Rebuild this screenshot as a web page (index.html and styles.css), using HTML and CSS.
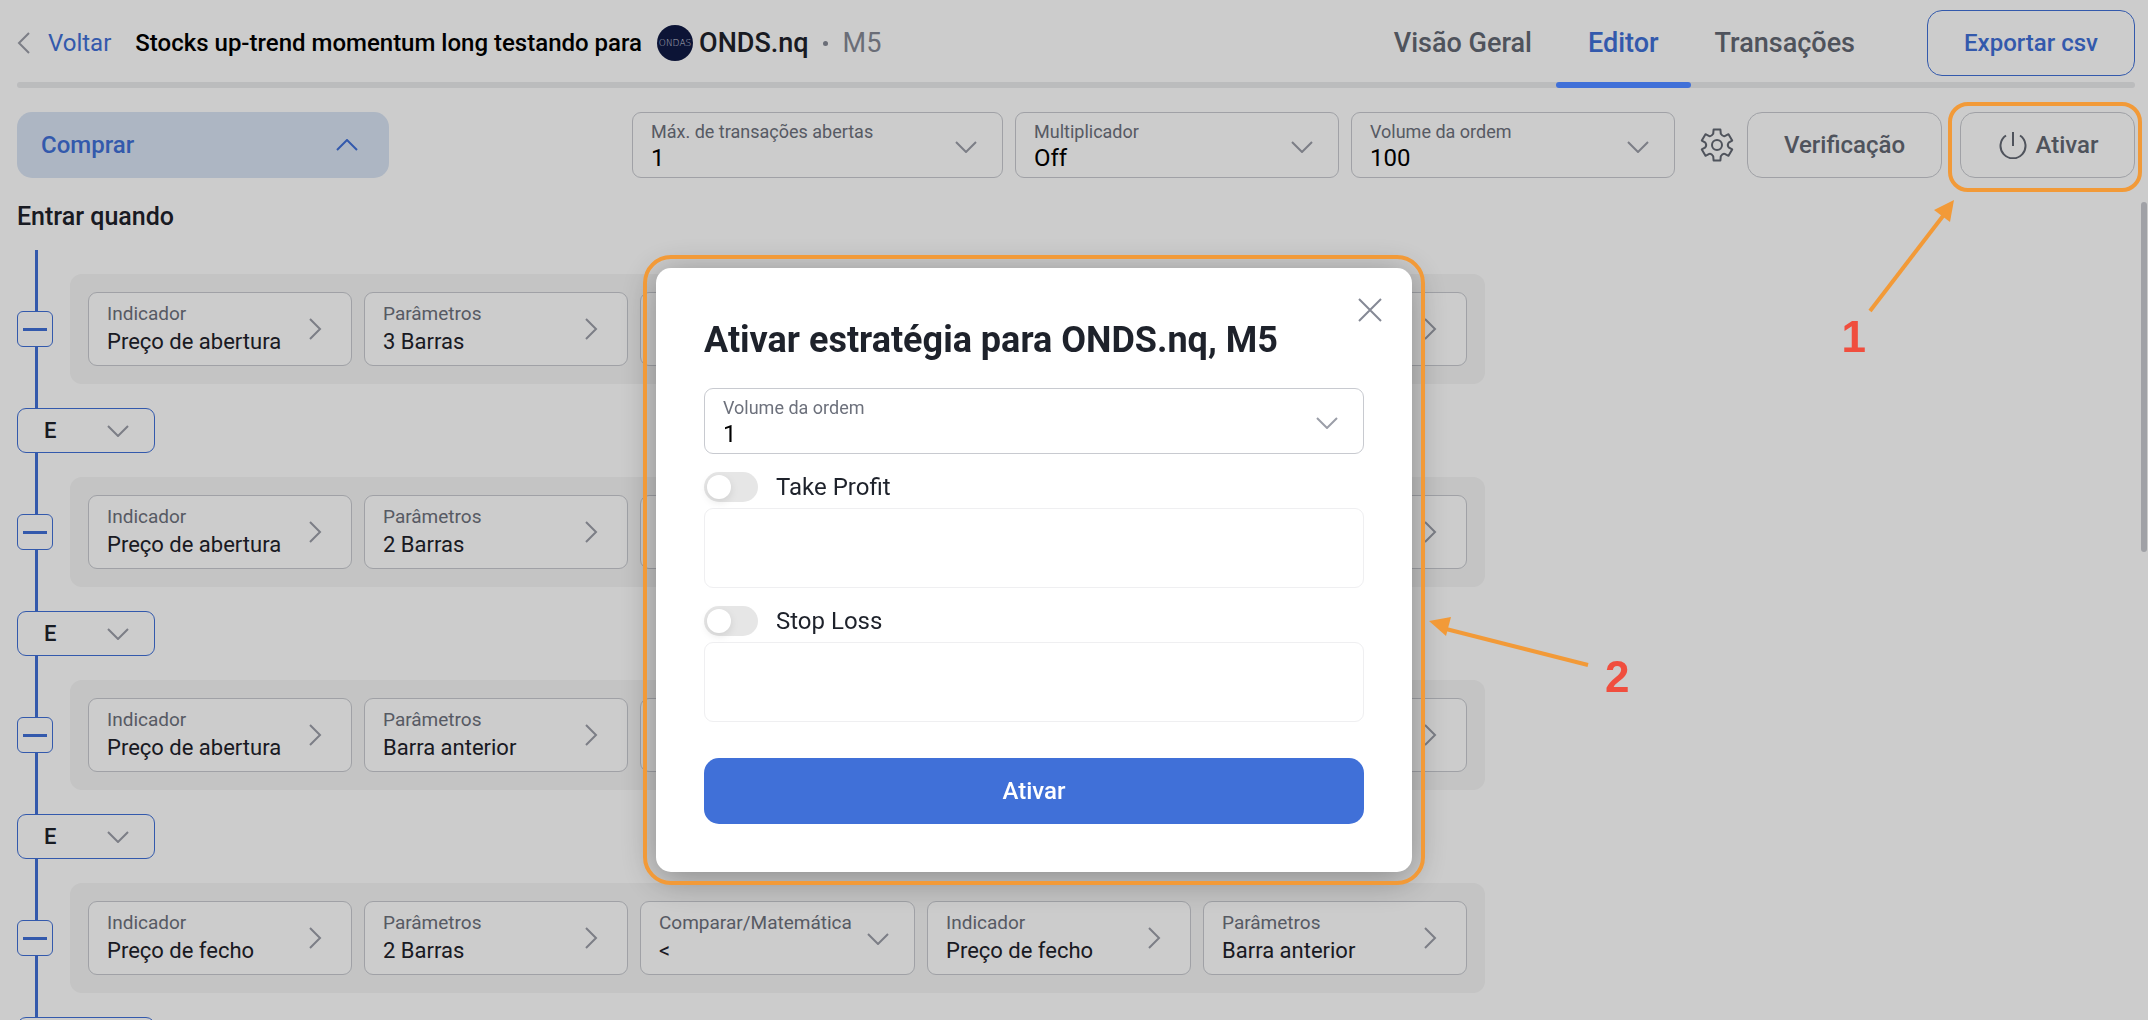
FILE: index.html
```
<!DOCTYPE html>
<html lang="pt">
<head>
    <meta charset="UTF-8">
    <meta name="viewport" content="width=device-width, initial-scale=1.0">
    <title>ONDS.nq - Editor de estratégia</title>
    <link rel="stylesheet" href="styles.css">
</head>
<body>
    <svg class="sprite" aria-hidden="true">
        <symbol id="down" viewBox="0 0 22 12"><path d="M1 1l10 10L21 1"/></symbol>
        <symbol id="right" viewBox="0 0 14 22"><path d="M2 1l10 10L2 21"/></symbol>
    </svg>

    <header class="header">
        <a href="#" class="back">
            <svg class="icon-back" viewBox="0 0 14 22"><path d="M12 1L2 11l10 10"/></svg>
            Voltar
        </a>
        <h1>Stocks up-trend momentum long testando para</h1>
        <div class="symbol">
            <span class="logo">ONDAS</span>
            <span class="symbol-name">ONDS.nq</span>
            <span class="dot"></span>
            <span class="period">M5</span>
        </div>
        <nav class="tabs">
            <a href="#">Visão Geral</a>
            <a href="#" class="active">Editor</a>
            <a href="#">Transações</a>
        </nav>
        <button class="export">Exportar csv</button>
    </header>

    <div class="toolbar">
        <button class="side">
            Comprar
            <svg class="icon-down" viewBox="0 0 22 12"><path d="M1 11L11 1l10 10"/></svg>
        </button>
        <div class="field field-wide">
            <label for="max-trades">Máx. de transações abertas</label>
            <select id="max-trades"><option>1</option></select>
            <svg class="icon-down"><use href="#down"/></svg>
        </div>
        <div class="field">
            <label for="multiplier">Multiplicador</label>
            <select id="multiplier"><option>Off</option></select>
            <svg class="icon-down"><use href="#down"/></svg>
        </div>
        <div class="field">
            <label for="volume">Volume da ordem</label>
            <select id="volume"><option>100</option></select>
            <svg class="icon-down"><use href="#down"/></svg>
        </div>
        <button class="settings" aria-label="Definições">
            <svg viewBox="0 0 34 34">
                <path d="M13.2 5.8L13.6 1.500H20.400L20.800 5.800Q22.800 8.800 24.700 8.100L28.500 6.200L32.200 12.600L28.600 14.700Q27 17 28.600 19.300L32.200 21.400L28.500 27.800L24.700 25.900Q22.800 25.200 20.800 28.200L20.400 32.500H13.600L13.200 28.200Q11.200 25.200 9.300 25.900L5.500 27.800L1.800 21.400L5.400 19.300Q7 17 5.400 14.700L1.800 12.600L5.500 6.200L9.300 8.100Q11.200 8.800 13.200 5.800z"/>
                <circle cx="17" cy="17" r="5"/>
            </svg>
        </button>
        <button class="outline verify">Verificação</button>
        <button class="outline activate">
            <svg viewBox="0 0 28 28"><path d="M14 1v14M7 4.500a12.500 12.500 0 1 0 14 0"/></svg>
            Ativar
        </button>
    </div>

    <main class="editor">
        <h2>Entrar quando</h2>
        <div class="rules" id="rules"></div>
    </main>

    <div class="scrollbar"></div>

    <div class="overlay">
        <div class="modal" role="dialog" aria-labelledby="modal-title">
            <button class="close" aria-label="Fechar">
                <svg viewBox="0 0 24 24"><path d="M1 1l22 22M23 1L1 23"/></svg>
            </button>
            <h2 id="modal-title">Ativar estratégia para ONDS.nq, M5</h2>
            <div class="field">
                <label for="order-volume">Volume da ordem</label>
                <select id="order-volume"><option>1</option></select>
                <svg class="icon-down"><use href="#down"/></svg>
            </div>
            <label class="toggle"><input type="checkbox">Take Profit</label>
            <div class="limit"></div>
            <label class="toggle"><input type="checkbox">Stop Loss</label>
            <div class="limit"></div>
            <button class="submit">Ativar</button>
        </div>
    </div>

    <div class="mark mark-activate"></div>
    <svg class="arrow arrow-one" viewBox="0 0 90 120">
        <path d="M5 113L78 18"/>
        <polygon points="89,2 69,12 85,24"/>
    </svg>
    <span class="step step-one">1</span>
    <svg class="arrow arrow-two" viewBox="0 0 164 54">
        <path d="M162 48L20 12"/>
        <polygon points="3,4 25,0 20,19"/>
    </svg>
    <span class="step step-two">2</span>

    <script>
        const rules = [
            ['Preço de abertura', '3 Barras'],
            ['Preço de abertura', '2 Barras'],
            ['Preço de abertura', 'Barra anterior'],
            ['Preço de fecho', '2 Barras']
        ];

        function card(label, value) {
            return `
                <button class="card">
                    <span class="card-label">${label}</span>
                    <span class="card-value">${value}</span>
                    <svg class="icon-right"><use href="#right"/></svg>
                </button>
            `;
        }

        document.getElementById('rules').innerHTML = rules.map(([indicator, params], i) => `
            <div class="rule">
                <button class="remove" aria-label="Remover"></button>
                <div class="cards">
                    ${card('Indicador', indicator)}
                    ${card('Parâmetros', params)}
                    <div class="card card-compare">
                        <label class="card-label" for="compare-${i}">Comparar/Matemática</label>
                        <select class="card-value" id="compare-${i}"><option>&lt;</option></select>
                        <svg class="icon-down"><use href="#down"/></svg>
                    </div>
                    ${card('Indicador', 'Preço de fecho')}
                    ${card('Parâmetros', 'Barra anterior')}
                </div>
            </div>
            <div class="join">
                <select aria-label="Operador"><option>E</option></select>
                <svg class="icon-down"><use href="#down"/></svg>
            </div>
        `).join('');
    </script>
</body>
</html>
```

FILE: styles.css
```
* {
    box-sizing: border-box;
}

body {
    margin: 0;
    height: 100vh;
    overflow: hidden;
    font-family: Roboto, sans-serif;
    font-size: 24px;
    line-height: 28px;
    color: #1e222b;
    background: #fff;
}

h1, h2 {
    margin: 0;
    font-size: 24px;
    font-weight: 500;
}

a {
    text-decoration: none;
}

button, select {
    font: inherit;
    color: inherit;
    margin: 0;
    padding: 0;
    border: none;
    background: none;
}

select {
    appearance: none;
}

svg {
    fill: none;
    stroke: #9b9ea8;
    stroke-width: 2;
    flex-shrink: 0;
}

.sprite {
    display: none;
}

.icon-down {
    width: 22px;
    height: 12px;
}

.icon-right, .icon-back {
    width: 14px;
    height: 22px;
}

/* Cabeçalho */
.header {
    position: relative;
    display: flex;
    align-items: center;
    height: 88px;
    margin: 0 13px 0 17px;
    padding-bottom: 2px;
}

.header::after {
    content: "";
    position: absolute;
    left: 0;
    right: 0;
    bottom: 0;
    height: 6px;
    border-radius: 3px;
    background: #eaebed;
}

.back {
    display: flex;
    align-items: center;
    gap: 17px;
    color: #4070d8;
}

.header h1 {
    margin-left: 24px;
    color: #000;
}

.symbol {
    display: flex;
    align-items: center;
    margin-left: 15px;
    font-size: 27px;
}

.logo {
    width: 36px;
    height: 36px;
    margin-right: 6px;
    border-radius: 50%;
    background: #101a44;
    color: #d5d8e2;
    font-family: "DejaVu Sans", sans-serif;
    font-size: 9px;
    font-weight: 200;
    line-height: 36px;
    text-align: center;
}

.symbol-name {
    font-weight: 500;
}

.dot {
    width: 5px;
    height: 5px;
    margin: 0 15px 0 14px;
    border-radius: 50%;
    background: #858995;
}

.period {
    color: #858995;
}

.tabs {
    display: flex;
    align-self: stretch;
    margin-left: auto;
    gap: 24px;
    font-size: 27px;
    font-weight: 500;
}

.tabs a {
    position: relative;
    padding-top: 29px;
    color: #636873;
}

.tabs .active {
    padding: 29px 32px 0;
    color: #4070d8;
}

.tabs .active::after {
    content: "";
    position: absolute;
    z-index: 1;
    left: 0;
    right: 0;
    bottom: -2px;
    height: 6px;
    border-radius: 3px;
    background: #4070d8;
}

.export {
    width: 208px;
    height: 66px;
    margin-left: 72px;
    border: 1px solid #4070d8;
    border-radius: 15px;
    color: #4070d8;
    font-weight: 500;
}

/* Barra de ferramentas */
.toolbar {
    display: flex;
    gap: 12px;
    margin: 24px 13px 0 17px;
}

.side {
    display: flex;
    align-items: center;
    justify-content: space-between;
    width: 372px;
    height: 66px;
    margin-right: auto;
    padding: 0 31px 0 24px;
    border-radius: 15px;
    background: #d9e4f4;
    color: #4070d8;
    font-weight: 500;
}

.side svg {
    stroke: #4070d8;
}

.field {
    position: relative;
    width: 324px;
    height: 66px;
    padding: 8px 18px 0;
    border: 1px solid #c8cad0;
    border-radius: 9px;
}

.field-wide {
    width: 371px;
}

.field label {
    display: block;
    font-size: 18px;
    line-height: 22px;
    color: #6d717c;
}

.field select {
    display: block;
    width: 100%;
    height: 30px;
    color: #000;
}

.field svg {
    position: absolute;
    right: 25px;
    top: 28px;
}

.settings {
    width: 34px;
    margin: 0 1px 0 13px;
}

.settings svg {
    display: block;
    width: 34px;
    height: 34px;
    stroke: #636873;
    stroke-linejoin: round;
}

.outline {
    height: 66px;
    border: 1px solid #c8cad0;
    border-radius: 15px;
    color: #636873;
    font-weight: 500;
}

.verify {
    width: 195px;
}

.activate {
    display: flex;
    align-items: center;
    justify-content: center;
    gap: 9px;
    width: 175px;
    margin-left: 6px;
    padding-left: 2px;
}

.activate svg {
    width: 28px;
    height: 28px;
    stroke: #636873;
}

/* Editor de regras */
.editor {
    margin: 24px 17px 0;
}

.editor h2 {
    font-size: 25px;
    line-height: 30px;
}

.rules {
    position: relative;
    display: flex;
    flex-direction: column;
    align-items: flex-start;
    gap: 24px;
    margin-top: 18px;
    padding-top: 24px;
}

.rules::before {
    content: "";
    position: absolute;
    left: 18px;
    top: 0;
    bottom: 0;
    width: 3px;
    background: #4070d8;
}

.rule {
    display: flex;
    align-items: center;
    gap: 17px;
}

.remove {
    position: relative;
    display: flex;
    align-items: center;
    justify-content: center;
    width: 36px;
    height: 36px;
    border: 1px solid #4070d8;
    border-radius: 6px;
    background: #fff;
}

.remove::before {
    content: "";
    width: 24px;
    height: 3px;
    background: #4070d8;
}

.cards {
    display: flex;
    gap: 12px;
    padding: 18px;
    border-radius: 12px;
    background: #f5f5f5;
}

.card {
    position: relative;
    width: 264px;
    height: 74px;
    padding: 0 18px 3px;
    border: 1px solid #c8cad0;
    border-radius: 9px;
    background: #fff;
    text-align: left;
}

.card-compare {
    width: 275px;
    padding-top: 7px;
}

.card-label, .card-value {
    display: block;
    font-size: 19px;
    line-height: 28px;
    color: #6d717c;
}

.card-value {
    width: 100%;
    font-size: 22px;
    color: #1e222b;
}

.card svg {
    position: absolute;
    right: 29px;
    top: 25px;
}

.card .icon-down {
    right: 25px;
    top: 31px;
}

.join {
    position: relative;
    width: 138px;
    height: 45px;
}

.join select {
    width: 100%;
    height: 45px;
    padding-left: 26px;
    border: 1px solid #4070d8;
    border-radius: 9px;
    background: #fff;
    font-size: 22px;
    font-weight: 500;
}

.join svg {
    position: absolute;
    right: 26px;
    top: 17px;
}

.scrollbar {
    position: fixed;
    right: 1px;
    top: 202px;
    width: 6px;
    height: 350px;
    border-radius: 3px;
    background: #c8cad0;
}

/* Janela de ativação */
.overlay {
    position: fixed;
    inset: 0;
    display: flex;
    justify-content: center;
    align-items: flex-start;
    padding: 268px 80px 0 0;
    background: rgba(0, 0, 0, 0.2);
}

.modal {
    position: relative;
    width: 756px;
    padding: 48px;
    border-radius: 15px;
    background: #fff;
    box-shadow: 0 6px 36px rgba(0, 0, 0, 0.35);
    outline: 4px solid #f29a38;
    outline-offset: 9px;
}

.modal h2 {
    margin-bottom: 24px;
    font-size: 36px;
    line-height: 48px;
    font-weight: 700;
}

.modal .field {
    width: 100%;
}

.close {
    position: absolute;
    right: 30px;
    top: 30px;
}

.close svg {
    display: block;
    width: 24px;
    height: 24px;
    stroke: #858995;
}

.toggle {
    display: flex;
    align-items: center;
    gap: 18px;
    height: 30px;
    margin-top: 18px;
}

.toggle input {
    appearance: none;
    width: 54px;
    height: 30px;
    margin: 0;
    padding: 3px;
    border-radius: 15px;
    background: #e6e6e6;
}

.toggle input::before {
    content: "";
    display: block;
    width: 24px;
    height: 24px;
    border-radius: 50%;
    background: #fff;
    box-shadow: 0 3px 9px rgba(0, 0, 0, 0.1);
}

.limit {
    height: 80px;
    margin-top: 6px;
    border: 1px solid #efeff1;
    border-radius: 9px;
}

.submit {
    width: 100%;
    height: 66px;
    margin-top: 36px;
    border-radius: 15px;
    background: #4070d8;
    color: #fff;
    font-weight: 500;
}

/* Marcas dos passos */
.mark-activate {
    position: absolute;
    right: 6px;
    top: 102px;
    width: 194px;
    height: 90px;
    border: 4px solid #f29a38;
    border-radius: 20px;
}

.arrow {
    position: absolute;
    stroke: #f29a38;
    stroke-width: 4;
}

.arrow polygon {
    fill: #f29a38;
    stroke: none;
}

.arrow-one {
    right: 193px;
    top: 198px;
    width: 90px;
    height: 120px;
}

.arrow-two {
    left: 1426px;
    top: 617px;
    width: 164px;
    height: 54px;
}

.step {
    position: absolute;
    color: #f04e3e;
    font-family: "Liberation Sans", sans-serif;
    font-size: 44px;
    font-weight: 700;
    line-height: 48px;
}

.step-one {
    right: 282px;
    top: 313px;
}

.step-two {
    left: 1605px;
    top: 653px;
}
```
